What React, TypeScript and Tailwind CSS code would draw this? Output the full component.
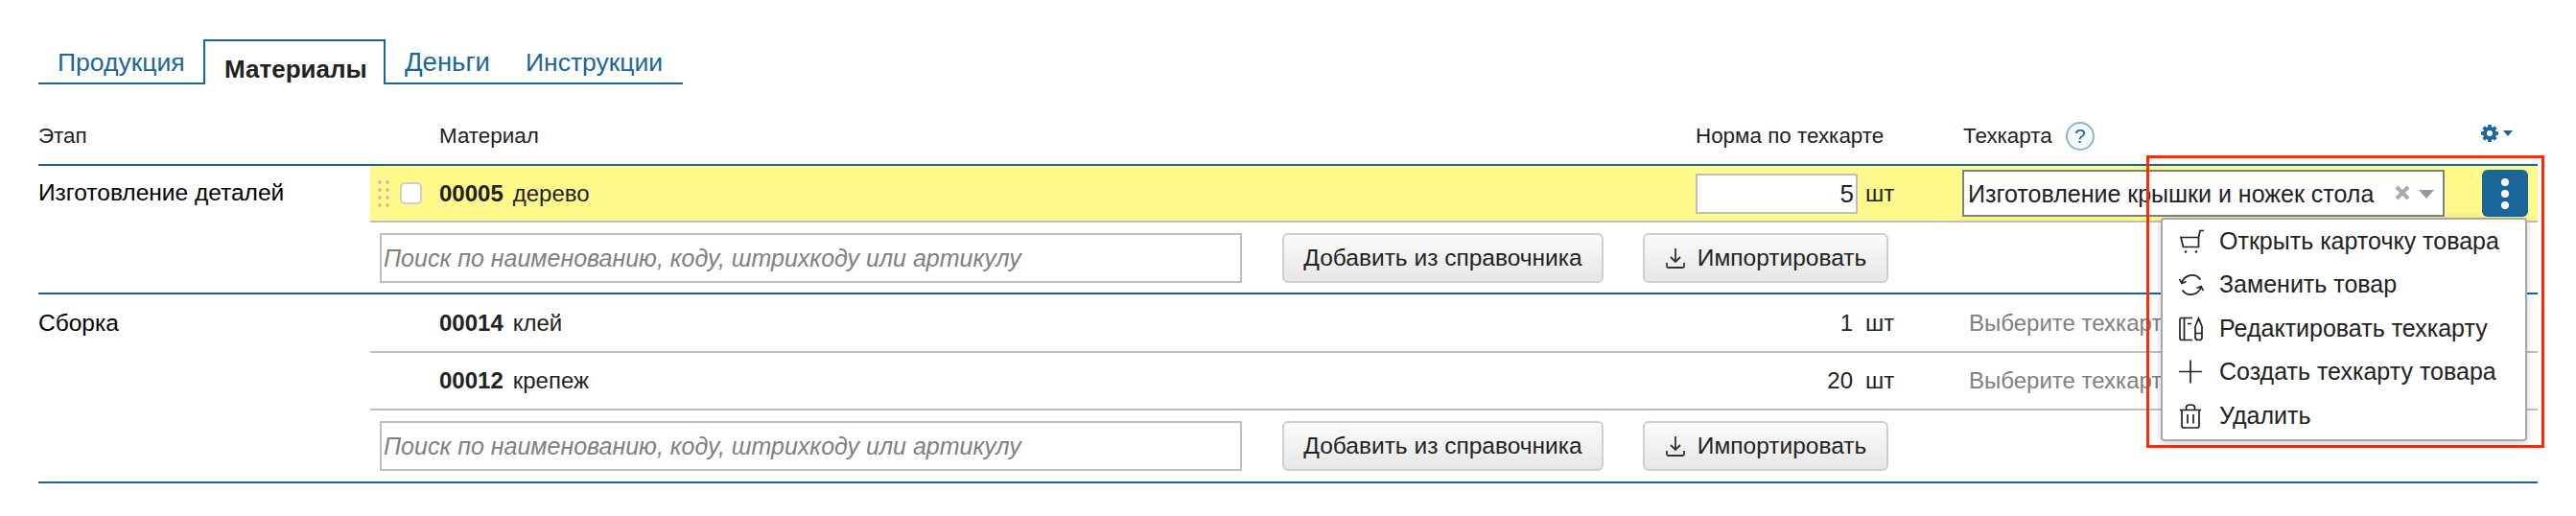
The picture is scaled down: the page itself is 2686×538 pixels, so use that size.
const BLUE = "#1b6699";

function ImportIcon() {
  return (
    <svg width="22" height="24" viewBox="0 0 22 24" fill="none" stroke="#333" strokeWidth="1.8">
      <path d="M11 2v14M6 11l5 5 5-5M2 17v3.5q0 1.5 1.5 1.5h15q1.500 0 1.500-1.500V17" />
    </svg>
  );
}

function Search() {
  return (
    <div className="w-[899px] h-[52px] border-2 border-[#bfbfbf] bg-white flex items-center pl-[2px] italic text-[25px] text-[#808080] whitespace-nowrap overflow-hidden">
      Поиск по наименованию, коду, штрихкоду или артикулу
    </div>
  );
}

function Btn({ children, className }: { children: React.ReactNode; className: string }) {
  return (
    <div className={`h-[52px] border-2 border-[#cfcfcf] rounded-[6px] bg-gradient-to-b from-[#fbfbfb] to-[#e6e6e6] flex items-center justify-center text-[24.5px] text-[#222] whitespace-nowrap ${className}`}>
      {children}
    </div>
  );
}

function AddRow({ h }: { h: string }) {
  return (
    <div className={`flex items-center pl-[10px] ${h}`}>
      <Search />
      <Btn className="w-[335px] ml-[42px]">Добавить из справочника</Btn>
      <Btn className="w-[256px] ml-[41px] gap-[12px]">
        <ImportIcon />
        Импортировать
      </Btn>
    </div>
  );
}

function Row({ code, name, qty, h }: { code: string; name: string; qty: string; h: string }) {
  return (
    <div className={`flex items-center border-b-2 border-[#bfbfbf] ${h}`}>
      <div className="w-[1382px] pl-[72px] whitespace-nowrap text-[#222]">
        <b>{code}</b>
        <span className="ml-[10px]">{name}</span>
      </div>
      <div className="w-[164px] text-right text-[#222]">{qty}</div>
      <div className="w-[112px] pl-[13px] text-[#222]">шт</div>
      <div className="pl-[9px] text-[#808080] whitespace-nowrap">Выберите техкарту</div>
    </div>
  );
}

const iconProps = { width: 26, height: 26, viewBox: "0 0 26 26", fill: "none", stroke: "#222", strokeWidth: 1.7 };

const menu: [React.ReactNode, string][] = [
  [
    <svg {...iconProps}>
      <path d="M2 8.500H20.500V18.500H4.500ZM20.500 8.500L22 1.500H26" />
      <circle cx="7" cy="23.500" r="1.300" fill="#222" stroke="none" />
      <circle cx="18" cy="23.500" r="1.300" fill="#222" stroke="none" />
    </svg>,
    "Открыть карточку товара",
  ],
  [
    <svg {...iconProps}>
      <path d="M3 11A11 11 0 0 1 22.500 7.500M23 15A11 11 0 0 1 3.500 18.500M0.500 7L3 11.500L7.500 9.500M25.500 19L23 14.500L18.500 16.500" />
    </svg>,
    "Заменить товар",
  ],
  [
    <svg {...iconProps}>
      <path d="M14 1.500H2.500Q1 1.500 1 3V23Q1 24.500 2.500 24.500H14M5.500 1.500V24.500M9 7.500H13M17 10.500L20.500 2L24 10.500V22Q24 24.500 20.500 24.500Q17 24.500 17 22ZM17 17.500H24" />
    </svg>,
    "Редактировать техкарту",
  ],
  [
    <svg {...iconProps}>
      <path d="M12 0.500V24.500M0 12.500H24" />
    </svg>,
    "Создать техкарту товара",
  ],
  [
    <svg {...iconProps}>
      <path d="M1 6.500H23M7.500 6.500V4Q7.500 1 12 1Q16.500 1 16.500 4V6.500M3 6.500V23Q3 25 5 25H19Q21 25 21 23V6.500M9 11V20.500M15 11V20.500" />
    </svg>,
    "Удалить",
  ],
];

export default function App() {
  return (
    <div className="relative w-[2686px] h-[538px] bg-white overflow-hidden pl-[40px] pr-[40px] pt-[41px] text-[24px] leading-[30px] text-black [font-family:'Liberation_Sans',Arial,sans-serif]">
      {/* tabs */}
      <div className="flex w-[672px] h-[47px] border-b-2 border-[#1b6699] text-[26.5px]">
        <div className="w-[172px] pl-[20px] pt-[9px] text-[#1b6699]">Продукция</div>
        <div className="w-[190px] h-[47px] border-2 border-b-0 border-[#1b6699] bg-white pl-[20px] pt-[14px] font-bold text-[#222] text-[26px]">Материалы</div>
        <div className="w-[146px] pl-[20px] pt-[9px] text-[27.5px] text-[#1b6699]">Деньги</div>
        <div className="pt-[9px] text-[#1b6699]">Инструкции</div>
      </div>

      {/* header */}
      <div className="flex items-center h-[85px] border-b-2 border-[#1b6699] pt-[24px] text-[22.4px] text-[#222]">
        <div className="w-[418px]">Этап</div>
        <div className="w-[1310px]">Материал</div>
        <div className="w-[278px]">Норма по техкарте</div>
        <div className="flex items-center gap-[14px] w-[541px] pl-[1px]">
          Техкарта
          <span className="w-[30px] h-[30px] rounded-full border-2 border-[#8fb5cf] bg-[#f6f9fb] flex items-center justify-center text-[21px] text-[#1b6699]">?</span>
        </div>
        <div className="flex items-center gap-[5px] mt-[-5px]">
          <svg width="18" height="18" viewBox="0 0 18 18">
            <circle cx="9" cy="9" r="5" fill="none" stroke={BLUE} strokeWidth="4" />
            {[0, 45, 90, 135, 180, 225, 270, 315].map((a) => (
              <rect key={a} x="7.200" y="0" width="3.600" height="4" fill={BLUE} transform={`rotate(${a} 9 9)`} />
            ))}
          </svg>
          <svg width="10" height="6" viewBox="0 0 10 6"><path fill={BLUE} d="M0 0h10L5 6z" /></svg>
        </div>
      </div>

      {/* group 1 */}
      <div className="flex border-b-2 border-[#1b6699]">
        <div className="w-[346px] pt-[13px] text-[24.5px]">Изготовление деталей</div>
        <div className="flex-1">
          <div className="flex items-center h-[59px] bg-[#fff98c] border-b-2 border-[#bfbfbf]">
            <div className="grid grid-cols-2 gap-x-[4px] gap-y-[4px] w-[12px] ml-[8px]">
              {[0, 1, 2, 3, 4, 5, 6, 7].map((i) => (
                <span key={i} className="w-[4px] h-[4px] rounded-full bg-[#c9c7a5]" />
              ))}
            </div>
            <div className="w-[23px] h-[23px] ml-[11px] rounded-[5px] border-2 border-[#d0d0c0] bg-white" />
            <div className="w-[1328px] pl-[18px] whitespace-nowrap text-[#222]">
              <b>00005</b>
              <span className="ml-[10px]">дерево</span>
            </div>
            <div className="w-[169px] h-[42px] border-2 border-[#bfbfbf] bg-white flex items-center justify-end pr-[2px] text-[26px] text-[#222]">5</div>
            <div className="w-[109px] pl-[8px] text-[#222]">шт</div>
            <div className="relative flex items-center w-[503px] h-[49px] border-2 border-[#808080] bg-white pl-[4px] text-[25px] text-[#222] whitespace-nowrap">
              Изготовление крышки и ножек стола
              <svg className="absolute left-[449px] top-[14px]" width="16" height="16" viewBox="0 0 16 16" stroke="#aaa" strokeWidth="4">
                <path d="M2 2l12 12M14 2L2 14" />
              </svg>
              <span className="absolute left-[474px] top-[19px] w-0 h-0 border-x-[8px] border-t-[9px] border-x-transparent border-t-[#999]" />
            </div>
            <div className="ml-[39px] w-[48px] h-[49px] rounded-[6px] bg-[#1b6699] flex flex-col items-center justify-center gap-[4px]">
              {[0, 1, 2].map((i) => (
                <span key={i} className="w-[8px] h-[8px] rounded-full bg-white" />
              ))}
            </div>
          </div>
          <AddRow h="h-[73px]" />
        </div>
      </div>

      {/* group 2 */}
      <div className="flex border-b-2 border-[#1b6699]">
        <div className="w-[346px] pt-[15px] text-[24.5px]">Сборка</div>
        <div className="flex-1">
          <Row code="00014" name="клей" qty="1" h="h-[61px]" />
          <Row code="00012" name="крепеж" qty="20" h="h-[60px]" />
          <AddRow h="h-[74px]" />
        </div>
      </div>

      {/* annotation */}
      <div className="absolute left-[2238px] top-[162px] w-[415px] h-[305px] border-[3px] border-[#ff2a00]" />

      {/* menu */}
      <div className="absolute left-[2253px] top-[227px] w-[382px] h-[233px] bg-white rounded-[4px] border-2 border-[#a8a8a8] shadow-[0_2px_8px_rgba(0,0,0,0.2)] text-[25px] text-[#222]">
        {menu.map(([icon, label]) => (
          <div key={label} className="flex items-center h-[45.500px] pl-[17px] gap-[16px] whitespace-nowrap">
            {icon}
            <span className="mt-[-2px]">{label}</span>
          </div>
        ))}
      </div>
    </div>
  );
}
